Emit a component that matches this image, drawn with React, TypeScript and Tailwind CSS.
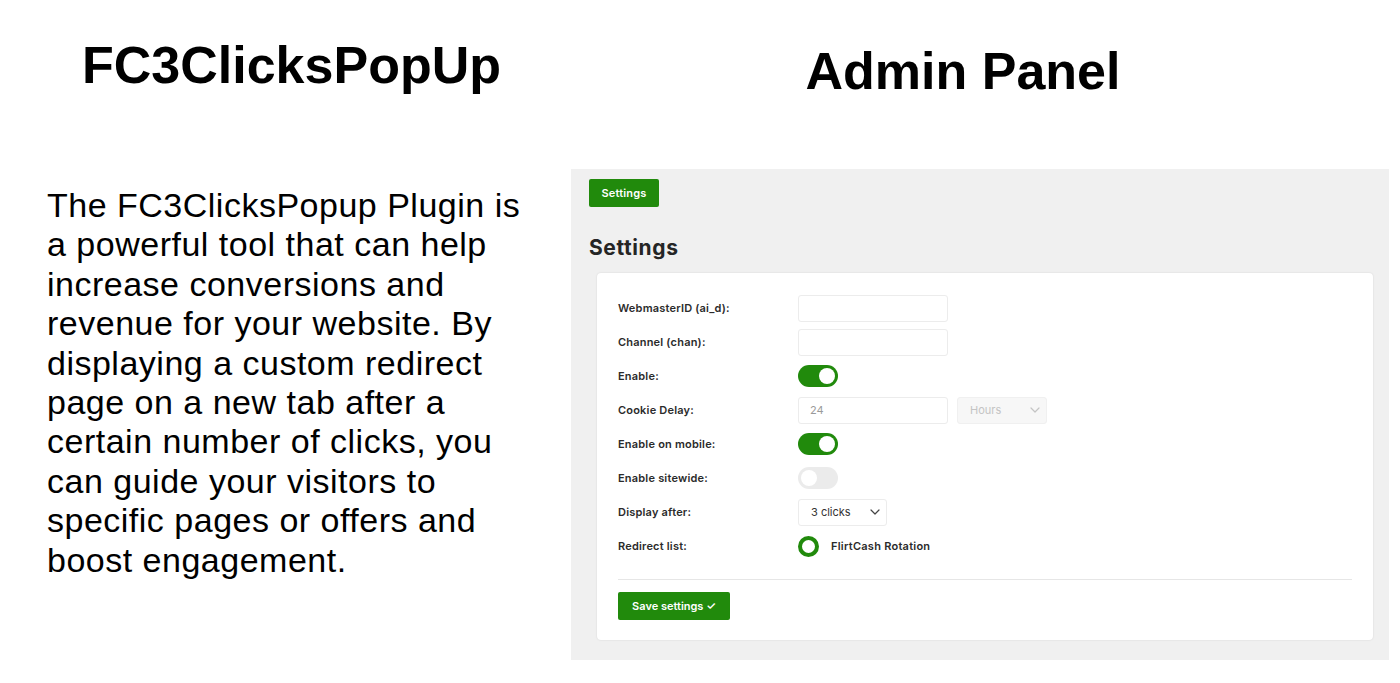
import React from "react";

const arial = { fontFamily: '"Liberation Sans", Arial, sans-serif' };

function Toggle({ on }: { on: boolean }) {
  return (
    <div
      className={`w-[40px] h-[22px] rounded-full flex items-center px-[3px] ${
        on ? "bg-[#218a0c] justify-end" : "bg-[#ebebeb] justify-start"
      }`}
    >
      <div className="w-[16px] h-[16px] rounded-full bg-white" />
    </div>
  );
}

function Chevron({ color }: { color: string }) {
  return (
    <svg width="10" height="6" viewBox="0 0 10 6" fill="none">
      <path d="M1 1l4 4 4-4" stroke={color} strokeWidth="1.2" strokeLinecap="round" strokeLinejoin="round" />
    </svg>
  );
}

function Row({ label, children }: { label: string; children: React.ReactNode }) {
  return (
    <div className="h-[34px] flex items-center">
      <div className="w-[180px] text-[11px] tracking-[0.2px] font-semibold text-[#2b2b2b]">{label}</div>
      <div className="flex items-center gap-[9px]">{children}</div>
    </div>
  );
}

export default function App() {
  return (
    <div className="w-[1400px] h-[683px] bg-white flex overflow-hidden">
      <div className="w-[571px] shrink-0 flex flex-col" style={arial}>
        <h1 className="mt-[34px] pl-[12px] text-center text-[52px] font-bold text-black leading-[62px]">
          FC3ClicksPopUp
        </h1>
        <p className="mt-[90px] pl-[47px] w-[535px] text-[34px] tracking-[0.5px] leading-[39.4px] text-black">
          The FC3ClicksPopup Plugin is a powerful tool that can help increase conversions and
          revenue for your website. By displaying a custom redirect page on a new tab after a
          certain number of clicks, you can guide your visitors to specific pages or offers and
          boost engagement.
        </p>
      </div>
      <div className="flex flex-col">
        <h1
          className="mt-[40px] text-center pr-[34px] text-[52px] font-bold text-black leading-[62px]"
          style={arial}
        >
          Admin Panel
        </h1>
        <div
          className="mt-[67px] w-[818px] h-[491px] bg-[#f0f0f0] pt-[10px] pl-[18px]"
          style={{ fontFamily: 'Inter, "Open Sans", sans-serif' }}
        >
          <button className="w-[70px] h-[28px] rounded-[2px] bg-[#218a0c] text-white text-[11px] font-semibold tracking-[0.2px]">
            Settings
          </button>
          <h2 className="mt-[27px] text-[21px] leading-[28px] font-bold tracking-[0.6px] text-[#252525]">Settings</h2>
          <div className="mt-[11px] ml-[8px] w-[776px] h-[367px] bg-white rounded-[4px] shadow-[0_0_2px_rgba(0,0,0,0.12)] pt-[18px] px-[21px]">
            <Row label="WebmasterID (ai_d):">
              <div className="w-[150px] h-[27px] border border-[#ececec] rounded-[3px]" />
            </Row>
            <Row label="Channel (chan):">
              <div className="w-[150px] h-[27px] border border-[#ececec] rounded-[3px]" />
            </Row>
            <Row label="Enable:">
              <Toggle on />
            </Row>
            <Row label="Cookie Delay:">
              <div className="w-[150px] h-[27px] border border-[#ececec] rounded-[3px] flex items-center pl-[11px] text-[11px] text-[#9a9a9a]">
                24
              </div>
              <div className="w-[90px] h-[27px] border border-[#f0f0f0] bg-[#f7f7f7] rounded-[3px] flex items-center justify-between pl-[12px] pr-[6px] text-[11px] text-[#c4c4c4]">
                Hours
                <Chevron color="#c4c4c4" />
              </div>
            </Row>
            <Row label="Enable on mobile:">
              <Toggle on />
            </Row>
            <Row label="Enable sitewide:">
              <Toggle on={false} />
            </Row>
            <Row label="Display after:">
              <div className="w-[89px] h-[27px] border border-[#ececec] rounded-[3px] flex items-center justify-between pl-[12px] pr-[6px] text-[11px] text-[#333]">
                3 clicks
                <Chevron color="#444" />
              </div>
            </Row>
            <Row label="Redirect list:">
              <div className="flex items-center gap-[12px]">
                <div className="w-[21px] h-[21px] rounded-full border-[4px] border-[#218a0c] bg-white" />
                <span className="text-[11px] font-semibold tracking-[0.25px] text-[#2b2b2b]">FlirtCash Rotation</span>
              </div>
            </Row>
            <div className="mt-[16px] h-px bg-[#e6e6e6]" />
            <button className="mt-[12px] w-[112px] h-[28px] rounded-[2px] bg-[#218a0c] text-white text-[11px] font-semibold">
              Save settings ✓
            </button>
          </div>
        </div>
      </div>
    </div>
  );
}
